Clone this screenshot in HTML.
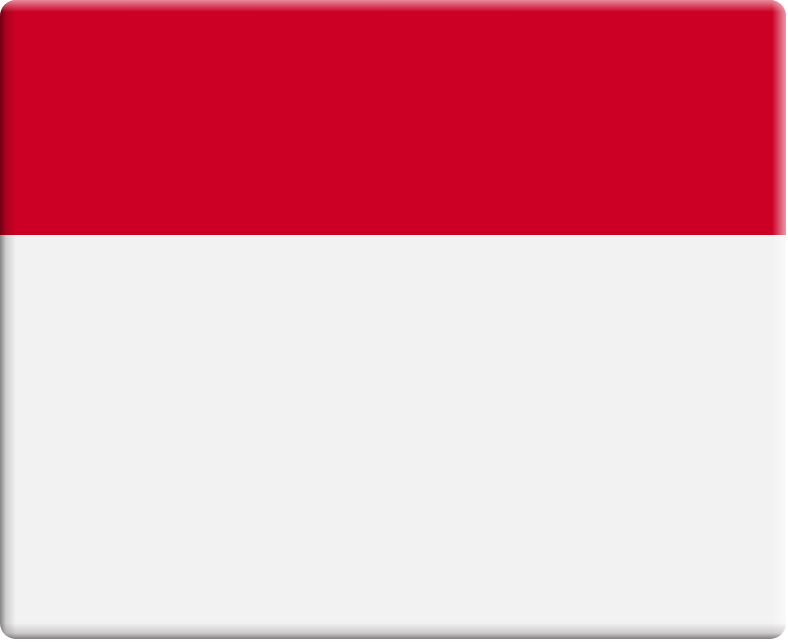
<!DOCTYPE html>
<html><head><style>
html,body{margin:0;padding:0;background:#fff;width:788px;height:642px;overflow:hidden}
.f{position:absolute;left:0;top:0;width:786px;height:639px;border-radius:16px;overflow:hidden;
background:linear-gradient(#cb0024 0,#cb0024 235px,#f2f2f2 235px,#f2f2f2 100%)}
.l{position:absolute;left:0;top:0;bottom:0;width:16px;background:linear-gradient(90deg,rgba(0,0,0,.45),rgba(0,0,0,.15) 6px,rgba(0,0,0,0))}
.t{position:absolute;left:0;right:0;top:0;height:12px;background:linear-gradient(rgba(255,255,255,.55),rgba(255,255,255,0))}
.r{position:absolute;right:0;top:0;bottom:0;width:14px;background:linear-gradient(270deg,rgba(255,255,255,.6),rgba(255,255,255,0))}
.b{position:absolute;left:0;right:0;bottom:0;height:16px;background:linear-gradient(0deg,rgba(60,50,50,.6),rgba(60,50,50,.2) 6px,rgba(0,0,0,0))}
</style></head><body>
<div class="f"><div class="l"></div><div class="t"></div><div class="r"></div><div class="b"></div></div>
</body></html>
